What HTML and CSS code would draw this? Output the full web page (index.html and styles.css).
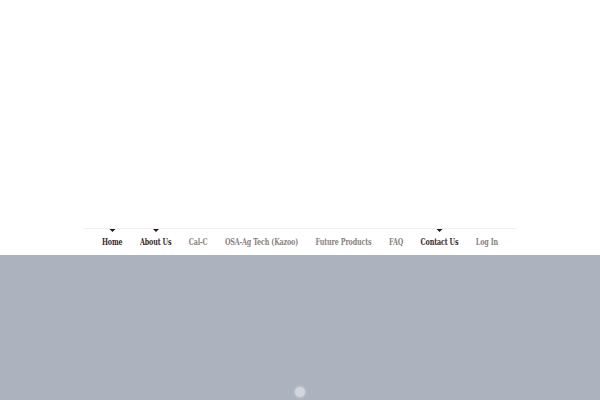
FILE: index.html
```html
<!DOCTYPE html>
<html>
<head>
<meta charset="utf-8">
<link rel="stylesheet" href="styles.css">
</head>
<body>
<header class="masthead"></header>
<nav class="menu">
  <ul class="menu-list">
    <li class="item active"><a href="#">Home</a></li>
    <li class="item active"><a href="#">About Us</a></li>
    <li class="item"><a href="#">Cal-C</a></li>
    <li class="item"><a href="#">OSA-Ag Tech (Kazoo)</a></li>
    <li class="item"><a href="#">Future Products</a></li>
    <li class="item"><a href="#">FAQ</a></li>
    <li class="item active"><a href="#">Contact Us</a></li>
    <li class="item"><a href="#">Log In</a></li>
  </ul>
</nav>
<section class="banner">
  <span class="dot"></span>
</section>
</body>
</html>
```
FILE: styles.css
```css
html, body {
  margin: 0;
  padding: 0;
  background: #ffffff;
}
body {
  width: 600px;
  height: 400px;
  overflow: hidden;
  font-family: "DejaVu Serif", "Liberation Serif", serif;
}
.masthead {
  height: 228px;
}
.menu {
  width: 432px;
  margin: 0 auto;
  border-top: 1px solid #f0f0f0;
  height: 26px;
  display: flex;
  justify-content: center;
}
.menu-list {
  list-style: none;
  margin: 0;
  padding: 0;
  display: flex;
  justify-content: center;
  gap: 23.3px;
  height: 100%;
  flex-shrink: 0;
  transform: scaleX(0.75);
  transform-origin: center top;
}
.item {
  position: relative;
  display: flex;
  flex-shrink: 0;
  align-items: flex-start;
  padding-top: 8px;
  white-space: nowrap;
}
.item a {
  font-size: 8.5px;
  font-weight: bold;
  text-decoration: none;
  color: #8c8282;
  line-height: 10px;
  letter-spacing: -0.2px;
}
.item.active a {
  color: #3b1f1f;
}
.item.active::before {
  content: "";
  position: absolute;
  top: 0;
  left: 50%;
  margin-left: -4px;
  border-left: 4px solid transparent;
  border-right: 4px solid transparent;
  border-top: 3px solid #2a1a1a;
}
.banner {
  height: 145px;
  background: #adb3be;
  display: flex;
  justify-content: center;
  align-items: flex-end;
}
.dot {
  width: 10px;
  height: 10px;
  border-radius: 50%;
  background: #d3d6dc;
  margin-bottom: 3px;
  box-shadow: 0 0 3px 1px rgba(210, 214, 222, 0.6);
}
```
